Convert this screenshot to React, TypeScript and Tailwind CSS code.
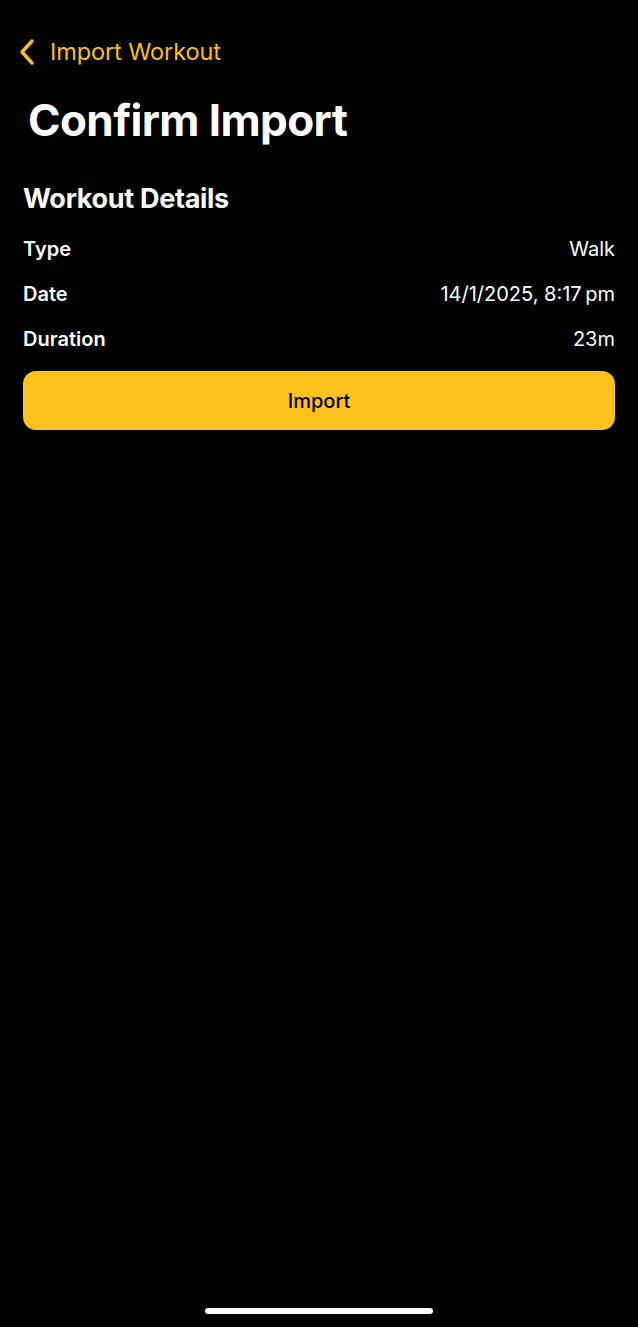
import React from "react";

export default function App() {
  const rows = [
    ["Type", "Walk"],
    ["Date", "14/1/2025, 8:17\u2009pm"],
    ["Duration", "23m"],
  ];
  return (
    <div
      className="relative w-[638px] h-[1327px] bg-black text-white overflow-hidden"
      style={{ fontFamily: "Inter, 'Noto Sans', sans-serif" }}
    >
      <div className="flex items-center h-[26px] mt-[39px] ml-[18px] text-[#FBC11B]">
        <svg width="18" height="28" viewBox="0 0 18 28" fill="none" className="mr-[14px]">
          <path d="M14 3 L4 14 L14 25" stroke="#FBC11B" strokeWidth="3.4" strokeLinecap="round" strokeLinejoin="round" />
        </svg>
        <span className="text-[23.5px] leading-none tracking-[-0.1px]">Import Workout</span>
      </div>
      <h1 className="ml-[28px] mt-[27px] text-[44px] leading-[56px] font-bold tracking-[-0.6px]">
        Confirm Import
      </h1>
      <div className="px-[23px]">
        <h2 className="mt-[34px] text-[27px] leading-[34px] font-bold tracking-[-0.3px]">Workout Details</h2>
        <div className="mt-[10px] flex flex-col">
          {rows.map(([k, v]) => (
            <div key={k} className="flex justify-between items-center h-[45px] text-[20px]">
              <span className="font-semibold">{k}</span>
              <span>{v}</span>
            </div>
          ))}
        </div>
        <button className="mt-[10px] w-full h-[59px] rounded-[13px] bg-[#FCC21B] text-black text-[20px] font-medium">
          Import
        </button>
      </div>
      <div className="absolute left-[205px] top-[1308px] w-[228px] h-[6px] rounded-full bg-white" />
    </div>
  );
}
